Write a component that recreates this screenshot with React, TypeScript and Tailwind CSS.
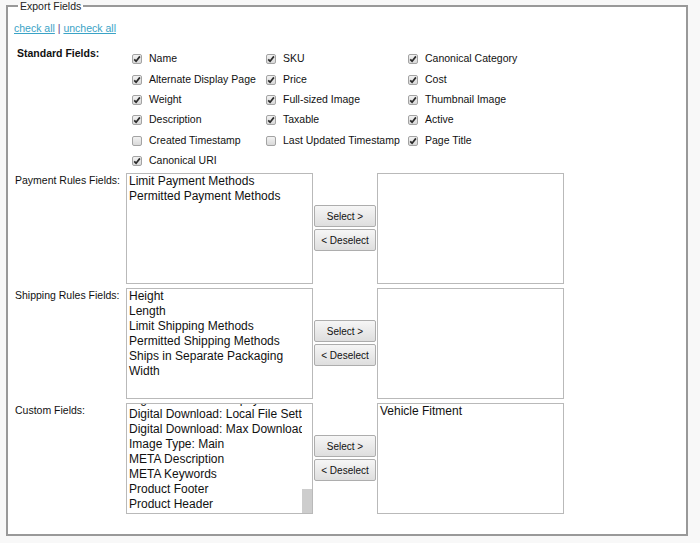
import React from "react";

type Field = { label: string; checked: boolean };

const standardFields: Field[][] = [
  [
    { label: "Name", checked: true },
    { label: "SKU", checked: true },
    { label: "Canonical Category", checked: true },
  ],
  [
    { label: "Alternate Display Page", checked: true },
    { label: "Price", checked: true },
    { label: "Cost", checked: true },
  ],
  [
    { label: "Weight", checked: true },
    { label: "Full-sized Image", checked: true },
    { label: "Thumbnail Image", checked: true },
  ],
  [
    { label: "Description", checked: true },
    { label: "Taxable", checked: true },
    { label: "Active", checked: true },
  ],
  [
    { label: "Created Timestamp", checked: false },
    { label: "Last Updated Timestamp", checked: false },
    { label: "Page Title", checked: true },
  ],
  [{ label: "Canonical URI", checked: true }],
];

// list is scrolled to the bottom, so the first entry only peeks in at the top
const customFields = [
  "Digital Download: Expiry",
  "Digital Download: Local File Settings",
  "Digital Download: Max Downloads",
  "Image Type: Main",
  "META Description",
  "META Keywords",
  "Product Footer",
  "Product Header",
];

function Checkbox({ checked }: { checked: boolean }) {
  return (
    <span className="flex h-[10px] w-[10px] shrink-0 items-center justify-center rounded-[2px] border border-[#a3a3a3] bg-gradient-to-b from-[#f2f2f2] to-[#d9d9d9]">
      {checked ? (
        <svg width="8" height="8" viewBox="0 0 8 8">
          <path d="M1.2 4.3 L3.1 6.2 L6.9 1.4" fill="none" stroke="#2b2b2b" strokeWidth="1.7" />
        </svg>
      ) : null}
    </span>
  );
}

function ListBox({ items }: { items: string[] }) {
  return (
    <div className="h-[111px] w-[187px] overflow-hidden border border-[#b9b9b9] bg-white">
      {items.map((item) => (
        <div key={item} className="h-[15px] whitespace-nowrap pl-[2px] text-[12px] leading-[15px] text-[#111]">
          {item}
        </div>
      ))}
    </div>
  );
}

function ScrolledListBox({ items }: { items: string[] }) {
  return (
    <div className="flex h-[111px] w-[187px] border border-[#b9b9b9] bg-white">
      <div className="flex min-w-0 flex-1 flex-col justify-end overflow-hidden pb-[1px]">
        {items.map((item) => (
          <div
            key={item}
            className="h-[15px] shrink-0 whitespace-nowrap pl-[2px] text-[12px] leading-[15px] text-[#111]"
          >
            {item}
          </div>
        ))}
      </div>
      <div className="flex w-[10px] flex-col justify-end bg-white">
        <div className="h-[24px] bg-[#cdcdcd]" />
      </div>
    </div>
  );
}

function MoveButtons() {
  return (
    <div className="mx-px flex w-[62px] flex-col items-stretch justify-center gap-[2px]">
      <button
        type="button"
        className="h-[22px] rounded-[2px] border border-[#adadad] bg-gradient-to-b from-[#f6f6f6] to-[#dedede] text-[10px] text-[#111]"
      >
        Select &gt;
      </button>
      <button
        type="button"
        className="h-[22px] rounded-[2px] border border-[#adadad] bg-gradient-to-b from-[#f6f6f6] to-[#dedede] text-[10px] text-[#111]"
      >
        &lt; Deselect
      </button>
    </div>
  );
}

function PickerRow({
  label,
  left,
  right,
  scrolled,
}: {
  label: string;
  left: string[];
  right: string[];
  scrolled?: boolean;
}) {
  return (
    <div className="flex">
      <div className="w-[112px] pl-[1px] text-[10.5px] leading-[14px] text-[#111]">{label}</div>
      {scrolled ? <ScrolledListBox items={left} /> : <ListBox items={left} />}
      <MoveButtons />
      <ListBox items={right} />
    </div>
  );
}

export default function App() {
  return (
    <div className="h-[543px] w-[700px] bg-[#f8f8f8] font-['Liberation_Sans',Arial,sans-serif]">
      <fieldset className="ml-[6px] w-[682px] border-2 border-[#999] bg-white pb-[20px] pl-[6px]">
        <legend className="ml-[4px] px-[2px] text-[10.5px] leading-[12px] text-[#222]">Export Fields</legend>

        <div className="pt-[10px] text-[10.5px] leading-[13px]">
          <a href="#" className="text-[#3aa3c6] underline">
            check all
          </a>{" "}
          <span className="text-[#6a3f86]">|</span>{" "}
          <a href="#" className="text-[#3aa3c6] underline">
            uncheck all
          </a>
        </div>

        <div className="mt-[14px] flex">
          <div className="-mt-[2.5px] w-[112px] pl-[3px] text-[10.5px] font-bold leading-[13px] text-[#111]">
            Standard Fields:
          </div>
          <div className="grid auto-rows-[20.4px] grid-cols-[134px_142px_auto] pl-[6px]">
            {standardFields.flatMap((row, r) =>
              row.map((f, c) => (
                <div key={`${r}-${c}`} className="flex items-center gap-[7px]">
                  <Checkbox checked={f.checked} />
                  <span className="whitespace-nowrap text-[10.5px] text-[#111]">{f.label}</span>
                </div>
              ))
            )}
          </div>
        </div>

        <div className="mt-[1.5px] flex flex-col gap-[4px]">
          <PickerRow
            label="Payment Rules Fields:"
            left={["Limit Payment Methods", "Permitted Payment Methods"]}
            right={[]}
          />
          <PickerRow
            label="Shipping Rules Fields:"
            left={[
              "Height",
              "Length",
              "Limit Shipping Methods",
              "Permitted Shipping Methods",
              "Ships in Separate Packaging",
              "Width",
            ]}
            right={[]}
          />
          <PickerRow label="Custom Fields:" left={customFields} right={["Vehicle Fitment"]} scrolled />
        </div>
      </fieldset>
    </div>
  );
}
